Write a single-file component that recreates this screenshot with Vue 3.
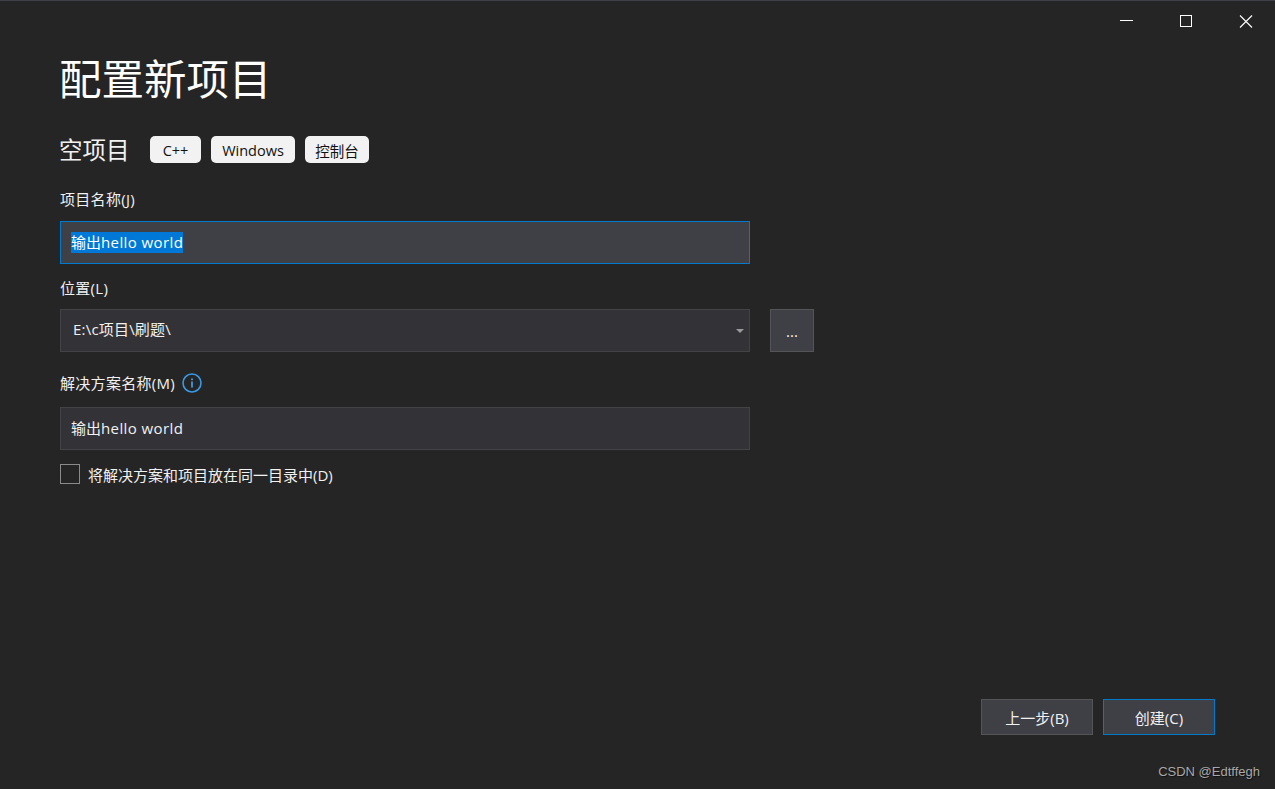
<script setup>
const tags = [
  { text: 'C++', width: 51 },
  { text: 'Windows', width: 84 },
  { text: '控制台', width: 64 },
]
</script>

<template>
  <div class="window">
    <header class="caption">
      <svg class="cap" width="60" height="40" viewBox="0 0 60 40"><path d="M25 19.5h13" stroke="#ffffff" fill="none"/></svg>
      <svg class="cap" width="60" height="40" viewBox="0 0 60 40"><rect x="25.5" y="14.5" width="11" height="11" stroke="#ffffff" fill="none"/></svg>
      <svg class="cap" width="60" height="40" viewBox="0 0 60 40"><path d="M25 14.5l12 12M37 14.5l-12 12" stroke="#ffffff" stroke-width="1.1" fill="none"/></svg>
    </header>
    <main class="content">
      <h1 class="title">配置新项目</h1>
      <div class="subtitle-row">
        <h2 class="subtitle">空项目</h2>
        <span v-for="t in tags" :key="t.text" class="tag" :style="{ width: t.width + 'px' }">{{ t.text }}</span>
      </div>
      <label class="label label-name">项目名称(J)</label>
      <div class="field focused"><span class="selected">输出<span class="latin">hello world</span></span></div>
      <label class="label label-loc">位置(L)</label>
      <div class="loc-row">
        <div class="field loc">
          <span class="lift path">E:\c项目\刷题\</span>
          <svg class="caret" width="8" height="4" viewBox="0 0 8 4"><path d="M0 0h8L4 4z" fill="#9a9a9c"/></svg>
        </div>
        <button class="browse">...</button>
      </div>
      <div class="label label-sol">
        <span>解决方案名称(M)</span>
        <svg width="20" height="20" viewBox="0 0 20 20">
          <circle cx="10" cy="10" r="9" fill="none" stroke="#3a9be6" stroke-width="1.6"/>
          <rect x="9.1" y="8.5" width="1.8" height="6" fill="#3a9be6"/>
          <rect x="9.1" y="5.4" width="1.8" height="1.8" fill="#3a9be6"/>
        </svg>
      </div>
      <div class="field"><span class="lift second">输出<span class="latin">hello world</span></span></div>
      <div class="check-row">
        <span class="check"></span>
        <span>将解决方案和项目放在同一目录中(D)</span>
      </div>
    </main>
    <footer class="actions">
      <button class="btn">上一步(B)</button>
      <button class="btn primary">创建(C)</button>
    </footer>
    <div class="watermark">CSDN @Edtffegh</div>
  </div>
</template>

<style>
html, body { margin: 0; background: #252526; }
</style>

<style scoped>
.window {
  position: relative;
  box-sizing: border-box;
  width: 1275px;
  height: 789px;
  display: flex;
  flex-direction: column;
  background: #252526;
  border-top: 1px solid #3f3f46;
  color: #f1f1f1;
  font-family: "Open Sans", "Noto Sans CJK SC", sans-serif;
  font-size: 15px;
  overflow: hidden;
}
.caption {
  display: flex;
  justify-content: flex-end;
  height: 40px;
  flex: none;
}
.cap { display: block; }
.content {
  flex: 1;
  padding: 0 60px;
  display: flex;
  flex-direction: column;
  align-items: flex-start;
}
.title {
  margin: 0 0 0 -1px;
  font-family: "Noto Sans CJK SC", sans-serif;
  font-size: 42.5px;
  font-weight: 400;
  line-height: 71px;
  color: #fff;
}
.subtitle-row {
  display: flex;
  align-items: center;
  gap: 10px;
  margin-top: 24px;
  height: 27px;
}
.subtitle {
  margin: 0 10px 0 -1px;
  font-family: "Noto Sans CJK SC", sans-serif;
  font-size: 23.5px;
  font-weight: 400;
  line-height: 27px;
  width: 71px;
  white-space: nowrap;
}
.tag {
  box-sizing: border-box;
  display: flex;
  align-items: center;
  justify-content: center;
  height: 27px;
  padding-top: 1px;
  border-radius: 5px;
  background: #f2f2f2;
  color: #111;
  font-size: 14.5px;
}
.label {
  display: flex;
  align-items: center;
  gap: 7px;
  height: 20px;
  color: #f1f1f1;
  line-height: 20px;
  letter-spacing: 0.3px;
}
.label-name { margin-top: 26px; }
.label-loc { margin-top: 14px; }
.label-sol { margin-top: 21px; }
.field {
  box-sizing: border-box;
  width: 690px;
  height: 43px;
  margin-top: 12px;
  padding-left: 10px;
  display: flex;
  align-items: center;
  background: #333337;
  border: 1px solid #434346;
  color: #f1f1f1;
}
.label-loc + .loc-row { margin-top: 11px; }
.label-sol + .field { margin-top: 14px; }
.focused {
  margin-top: 12px;
  background: #3f3f46;
  border-color: #007acc;
}
.selected {
  background: #0078d7;
  color: #fff;
  line-height: 21px;
}
.latin { letter-spacing: 0.4px; }
.lift { line-height: 20px; margin-bottom: 3px; }
.second { margin-bottom: 1px; }
.path { letter-spacing: 0.2px; }
.loc-row {
  display: flex;
  gap: 20px;
}
.loc {
  margin-top: 0;
  padding-left: 12px;
  justify-content: space-between;
  padding-right: 5px;
}
.browse {
  box-sizing: border-box;
  width: 44px;
  height: 43px;
  background: #3f3f46;
  border: 1px solid #555558;
  color: #f1f1f1;
  font: inherit;
  padding: 0;
}
.check-row {
  display: flex;
  align-items: center;
  gap: 8px;
  margin-top: 14px;
  height: 20px;
}
.check {
  box-sizing: border-box;
  width: 20px;
  height: 20px;
  border: 1px solid #8a8a8a;
}
.actions {
  display: flex;
  justify-content: flex-end;
  gap: 10px;
  padding: 0 60px 54px 0;
}
.btn {
  box-sizing: border-box;
  width: 112px;
  height: 36px;
  background: #3f3f46;
  border: 1px solid #555558;
  color: #f1f1f1;
  font: inherit;
  padding: 0;
}
.primary { border-color: #007acc; }
.watermark {
  position: absolute;
  right: 15px;
  bottom: 10px;
  font-family: "Liberation Sans", sans-serif;
  font-size: 13px;
  color: #a8a8a8;
  text-shadow: 1px 1px 1px #111;
}
</style>
